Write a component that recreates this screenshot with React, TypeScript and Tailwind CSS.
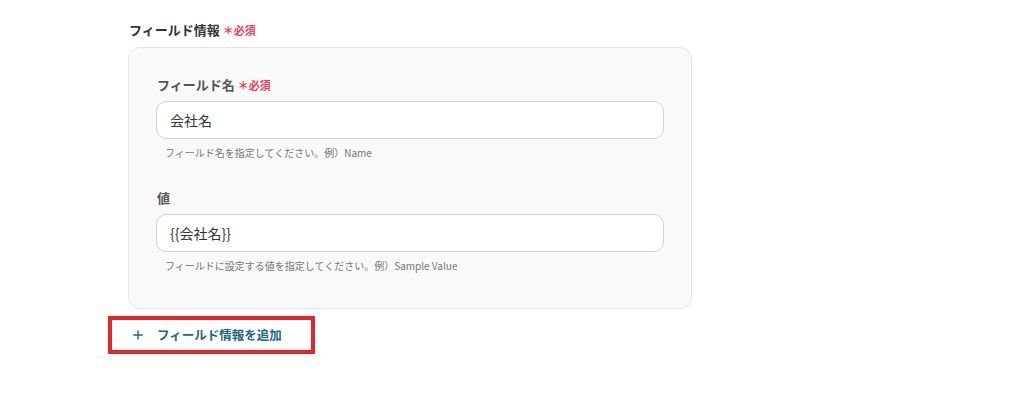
import { Plus } from 'lucide-react';

const FONT = { fontFamily: '"Noto Sans CJK JP", "Noto Sans", sans-serif' };

const Required = () => (
  <span className="ml-[3px] text-[11px] font-bold text-[#f0405a]">＊必須</span>
);

interface FieldProps {
  label: string;
  required?: boolean;
  value: string;
  hint: string;
}

const Field = ({ label, required, value, hint }: FieldProps) => (
  <div>
    <div className="flex h-[20px] items-center pl-[1px] text-[13px] font-bold text-[#555]">
      {label}
      {required && <Required />}
    </div>
    <div className="mt-[6px] flex h-[38px] items-center rounded-[10px] border border-[#cfd4db] bg-white px-[13px] text-[14px] text-[#333]">
      {value}
    </div>
    <div className="mt-[6px] flex h-[14px] items-center pl-[9px] text-[10px] text-[#777]">
      {hint}
    </div>
  </div>
);

export default function App() {
  return (
    <div className="min-h-[405px] w-[1014px] bg-white pl-[108px] pt-[21px]" style={FONT}>
      <div className="ml-[21px] flex h-[18px] items-center text-[13px] font-bold text-[#333]">
        フィールド情報
        <Required />
      </div>
      <div className="ml-[20px] mt-[8px] flex w-[564px] flex-col gap-[29px] rounded-[12px] border border-[#e6e6e6] bg-[#f9f9f9] px-[27px] pb-[36px] pt-[27px]">
        <Field
          label="フィールド名"
          required
          value="会社名"
          hint="フィールド名を指定してください。例）Name"
        />
        <Field
          label="値"
          value="{{会社名}}"
          hint="フィールドに設定する値を指定してください。例）Sample Value"
        />
      </div>
      <button
        type="button"
        className="mt-[7px] flex h-[38px] w-[207px] items-center border-[4px] border-[#e3262a] pl-[19px] text-[12.5px] font-bold text-[#1d6680]"
      >
        <Plus className="h-[14px] w-[14px]" strokeWidth={2.5} />
        <span className="ml-[12px]">フィールド情報を追加</span>
      </button>
    </div>
  );
}
